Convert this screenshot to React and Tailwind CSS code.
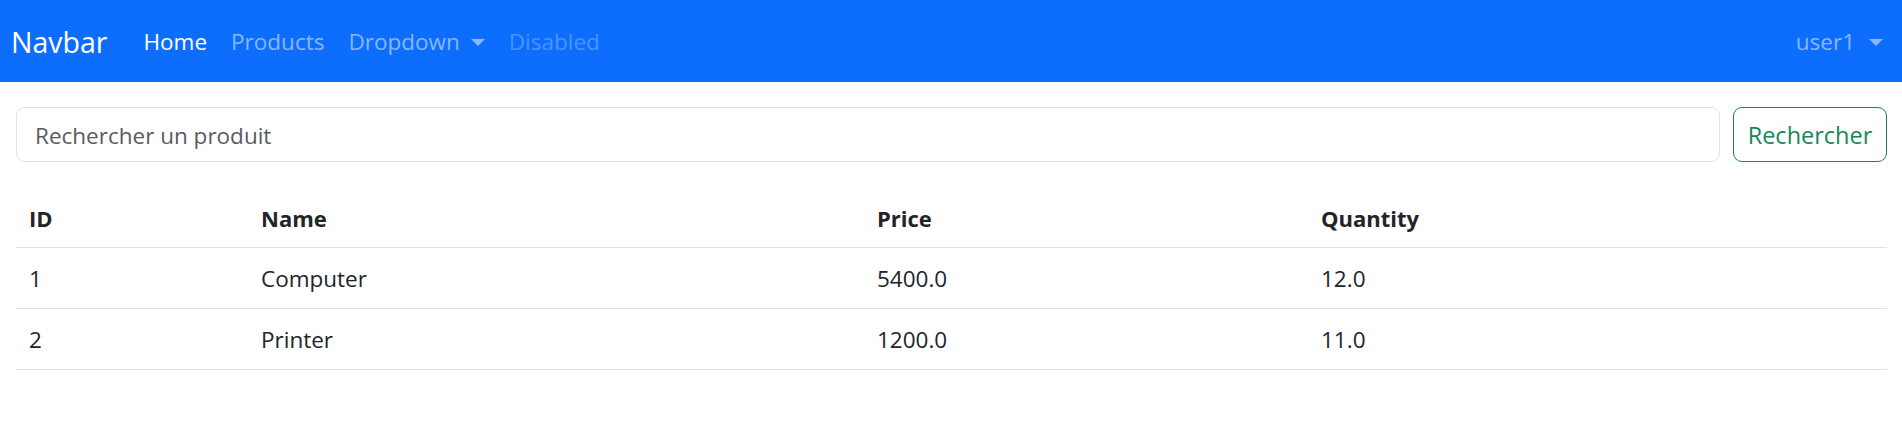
import { useState } from 'react';

const products = [
  { id: 1, name: 'Computer', price: '5400.0', quantity: '12.0' },
  { id: 2, name: 'Printer', price: '1200.0', quantity: '11.0' },
];

const Caret = ({ className }) => (
  <span
    className={`inline-block w-0 h-0 border-l-[7px] border-r-[7px] border-t-[7px] border-l-transparent border-r-transparent ${className}`}
  />
);

const Navbar = () => (
  <nav className="h-[82px] bg-[#0d6efd] flex items-center justify-between pl-[11px] pr-[7px]">
    <div className="flex items-center">
      <a className="text-[28.5px] leading-[45px] text-white mr-[24px] pt-[2px]">Navbar</a>
      <ul className="flex items-center text-[22.5px] leading-[36px] pt-[2px]">
        <li>
          <a className="block px-[12px] text-white">Home</a>
        </li>
        <li>
          <a className="block px-[12px] text-[#8ab6fe]">Products</a>
        </li>
        <li>
          <a className="flex items-center gap-[11px] px-[12px] text-[#8ab6fe]">
            Dropdown
            <Caret className="border-t-[#8ab6fe]" />
          </a>
        </li>
        <li>
          <a className="block px-[12px] text-[#4b94fd]">Disabled</a>
        </li>
      </ul>
    </div>
    <a className="flex items-center gap-[14px] px-[12px] pt-[2px] text-[22.5px] leading-[36px] text-[#8ab6fe]">
      user1
      <Caret className="border-t-[#8ab6fe]" />
    </a>
  </nav>
);

const App = () => {
  const [keyword, setKeyword] = useState('');

  return (
    <div className="min-h-screen bg-white font-['Open_Sans',sans-serif] text-[#212529]">
      <Navbar />
      <div className="px-[16px] pr-[15px] mt-[25px]">
        <form className="flex gap-[13px]" onSubmit={(e) => e.preventDefault()}>
          <input
            type="text"
            value={keyword}
            onChange={(e) => setKeyword(e.target.value)}
            placeholder="Rechercher un produit"
            className="flex-1 h-[55px] px-[18px] pt-[2px] border border-[#dee2e6] rounded-[9px] text-[22.5px] outline-0 placeholder:text-[#595c5f]"
          />
          <button className="h-[55px] w-[154px] pt-[2px] border border-[#198754] rounded-[9px] text-[23.5px] text-[#198754]">
            Rechercher
          </button>
        </form>
        <table className="w-full mt-[25px] border-collapse text-[22.5px] leading-[36px]">
          <thead>
            <tr className="border-b border-[#dee2e6]">
              <th className="w-[233px] px-[13px] pt-[13px] pb-[11px] text-left font-bold text-[22px]">ID</th>
              <th className="w-[616px] px-[12px] pt-[13px] pb-[11px] text-left font-bold text-[22px]">Name</th>
              <th className="w-[444px] px-[12px] pt-[13px] pb-[11px] text-left font-bold text-[22px]">Price</th>
              <th className="px-[12px] pt-[13px] pb-[11px] text-left font-bold text-[22px]">Quantity</th>
            </tr>
          </thead>
          <tbody>
            {products.map((p) => (
              <tr key={p.id} className="border-b border-[#dee2e6]">
                <td className="px-[13px] pt-[13px] pb-[11px]">{p.id}</td>
                <td className="px-[12px] pt-[13px] pb-[11px]">{p.name}</td>
                <td className="px-[12px] pt-[13px] pb-[11px]">{p.price}</td>
                <td className="px-[12px] pt-[13px] pb-[11px]">{p.quantity}</td>
              </tr>
            ))}
          </tbody>
        </table>
      </div>
    </div>
  );
};

export default App;
